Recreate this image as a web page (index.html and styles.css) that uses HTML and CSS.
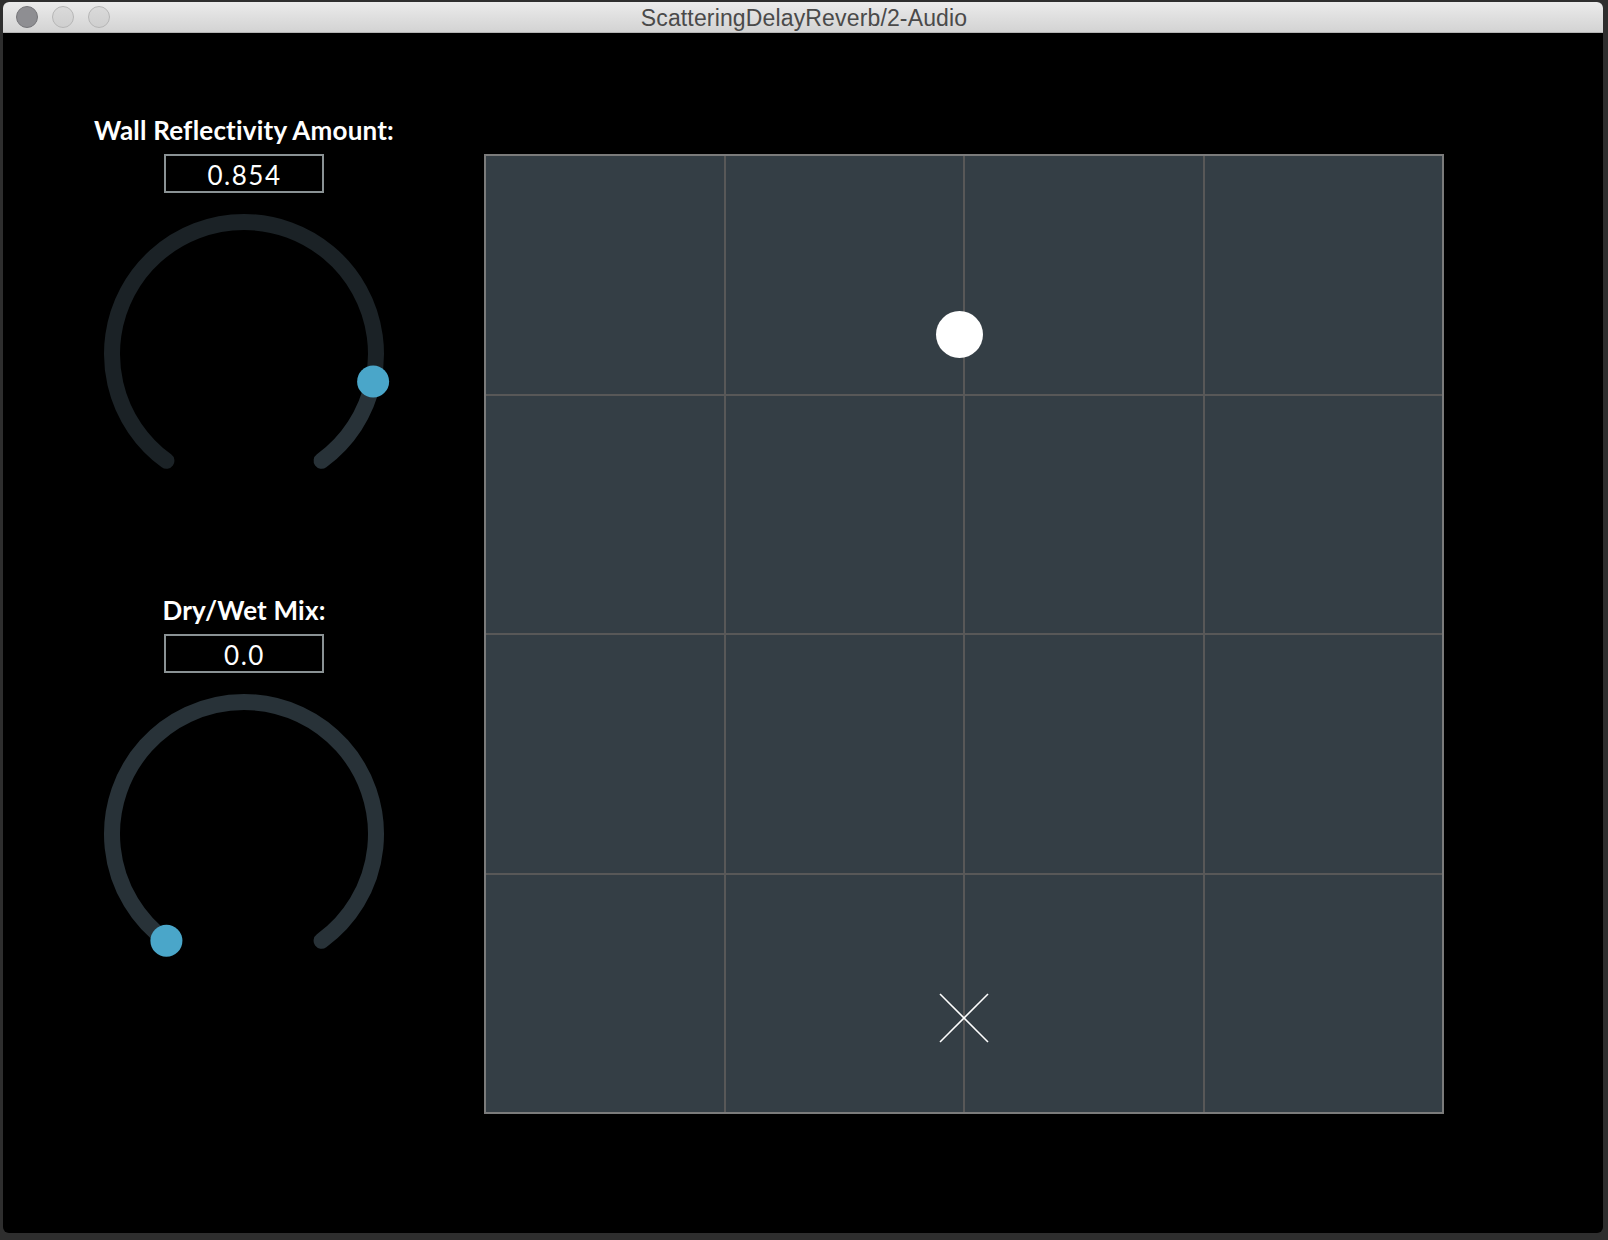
FILE: index.html
```html
<!DOCTYPE html>
<html lang="en">
<head>
<meta charset="utf-8">
<title>ScatteringDelayReverb/2-Audio</title>
<link rel="stylesheet" href="styles.css">
</head>
<body>
<div class="window">
  <div class="titlebar">
    <div class="lights">
      <span class="light light-close"></span>
      <span class="light"></span>
      <span class="light"></span>
    </div>
    <div class="title">ScatteringDelayReverb/2-Audio</div>
  </div>
  <div class="content">
    <div class="controls">
      <section class="knob-section">
        <div class="knob-label">Wall Reflectivity Amount:</div>
        <div class="value-box">0.854</div>
        <svg class="knob" width="320" height="280" viewBox="0 0 320 280">
          <path class="arc-value" d="M82.41 260.79 A132 132 0 1 1 289.11 181.45"/>
          <path class="arc-rest" d="M289.11 181.45 A132 132 0 0 1 237.59 260.79"/>
          <circle class="thumb" cx="289.11" cy="181.45" r="16"/>
        </svg>
      </section>
      <section class="knob-section">
        <div class="knob-label">Dry/Wet Mix:</div>
        <div class="value-box">0.0</div>
        <svg class="knob" width="320" height="280" viewBox="0 0 320 280">
          <path class="arc-rest" d="M82.41 260.79 A132 132 0 1 1 237.59 260.79"/>
          <circle class="thumb" cx="82.41" cy="260.79" r="16"/>
        </svg>
      </section>
    </div>
    <div class="pad">
      <div class="pad-grid">
        <div class="cell"></div><div class="cell"></div><div class="cell"></div><div class="cell"></div>
        <div class="cell"></div><div class="cell"></div><div class="cell"></div><div class="cell"></div>
        <div class="cell"></div><div class="cell"></div><div class="cell"></div><div class="cell"></div>
        <div class="cell"></div><div class="cell"></div><div class="cell"></div><div class="cell"></div>
      </div>
      <div class="source-dot"></div>
      <svg class="listener" width="48" height="48" viewBox="0 0 48 48">
        <line x1="0" y1="0" x2="48" y2="48"/>
        <line x1="48" y1="0" x2="0" y2="48"/>
      </svg>
    </div>
  </div>
</div>
</body>
</html>
```
FILE: styles.css
```css
html, body {
  margin: 0;
  padding: 0;
}
body {
  background: #2e2e2e;
  width: 1608px;
  height: 1240px;
  overflow: hidden;
}
.window {
  margin: 2px 0 0 3px;
  width: 1600px;
  height: 1231px;
  border-radius: 6px;
  overflow: hidden;
  background: #000;
  display: flex;
  flex-direction: column;
}
.titlebar {
  height: 30px;
  flex: none;
  border-bottom: 1px solid #b3b3b3;
  background: linear-gradient(#ebebeb, #d3d3d3);
  position: relative;
  display: flex;
  align-items: center;
  justify-content: center;
}
.lights {
  position: absolute;
  left: 13px;
  top: 4px;
  display: flex;
  gap: 14px;
}
.light {
  width: 20px;
  height: 20px;
  border-radius: 50%;
  background: linear-gradient(#dadada, #cfcfcf);
  border: 1px solid #b6b6b6;
}
.light-close {
  background: #8e8e92;
  border-color: #76767a;
}
.title {
  font-family: "Liberation Sans", Arial, sans-serif;
  font-size: 23px;
  color: #4a4a4a;
  letter-spacing: 0.15px;
  margin-left: 2px;
  margin-top: 2px;
}
.content {
  flex: 1;
  display: flex;
  padding-top: 82px;
}
.controls {
  width: 320px;
  margin-left: 81px;
  display: flex;
  flex-direction: column;
  gap: 115px;
}
.knob-section {
  display: flex;
  flex-direction: column;
  align-items: center;
}
.knob-label {
  font-family: Lato, "Noto Sans", sans-serif;
  font-weight: 700;
  font-size: 26px;
  line-height: 30px;
  height: 30px;
  color: #fff;
  white-space: nowrap;
  letter-spacing: 0.2px;
  margin-bottom: 9px;
}
.value-box {
  box-sizing: border-box;
  width: 160px;
  height: 39px;
  border: 2px solid #8a9294;
  color: #fff;
  font-family: Lato, "Noto Sans", sans-serif;
  font-size: 26px;
  display: flex;
  align-items: center;
  justify-content: center;
  letter-spacing: 1.5px;
  padding-left: 1px;
  padding-top: 2px;
}
.knob {
  display: block;
  margin-top: 7px;
}
.arc-value, .arc-rest {
  fill: none;
  stroke-width: 16;
  stroke-linecap: round;
}
.arc-value {
  stroke: #1b2226;
}
.arc-rest {
  stroke: #283238;
}
.thumb {
  fill: #4aa6c9;
}
.pad {
  position: relative;
  margin-left: 80px;
  margin-top: 39px;
  width: 960px;
  height: 960px;
  box-sizing: border-box;
  border: 2px solid #7b7b7b;
  background: #585858;
}
.pad-grid {
  display: grid;
  grid-template-columns: repeat(4, 1fr);
  grid-template-rows: repeat(4, 1fr);
  gap: 2px;
  width: 100%;
  height: 100%;
}
.cell {
  background: #343e45;
}
.source-dot {
  position: absolute;
  left: 450px;
  top: 155px;
  width: 47px;
  height: 47px;
  border-radius: 50%;
  background: #fff;
}
.listener {
  position: absolute;
  left: 454px;
  top: 838px;
  overflow: visible;
}
.listener line {
  stroke: #fff;
  stroke-width: 1.6;
}
```
